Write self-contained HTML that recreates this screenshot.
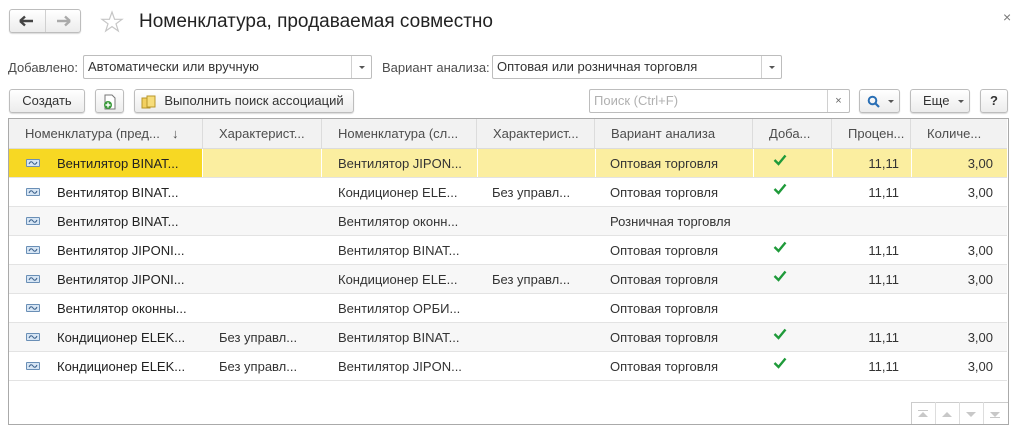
<!DOCTYPE html>
<html><head><meta charset="utf-8"><style>
*{box-sizing:border-box;margin:0;padding:0}
body{width:1020px;height:430px;background:#fff;font-family:"Liberation Sans",Arial,sans-serif;font-size:13px;color:#333;position:relative;overflow:hidden}
.a{position:absolute}
.btn{position:absolute;border:1px solid #bdbdbd;border-radius:3px;background:linear-gradient(#fff,#ececec);box-shadow:0 1px 1px rgba(0,0,0,.15);height:24px;line-height:22px;text-align:center;color:#333}
.inp{position:absolute;border:1px solid #bdbdbd;border-radius:2px;background:#fff;height:24px;line-height:22px;padding-left:4px;color:#333}
.dd{position:absolute;right:0;top:0;width:20px;height:22px;border-left:1px solid #d0d0d0}
.dd:after{content:"";position:absolute;left:7px;top:10px;border:3px solid transparent;border-top:3px solid #555;border-bottom:0}
.hdr{position:absolute;top:119px;height:30px;background:#f2f2f2;border-right:1px solid #dcdcdc;border-bottom:1px solid #dcdcdc;line-height:29px;padding-left:16px;color:#4d4d4d;white-space:nowrap}
.row{position:absolute;left:9px;width:998px;height:29px;border-bottom:1px solid #e3e3e3}
.c{position:absolute;top:0;height:28px;line-height:29px;white-space:nowrap;color:#333}
.r{text-align:right}
.ic{position:absolute;left:17px;top:10px;width:14px;height:8px;border:1px solid #6a8fb6;background:#d6e5f4;border-radius:1px}
</style></head><body>
<div class="btn" style="left:9px;top:9px;width:72px;height:24px"></div>
<div class="a" style="left:45px;top:10px;width:1px;height:22px;background:#d0d0d0"></div>
<svg class="a" style="left:19px;top:15px" width="16" height="12"><path d="M1 6H14M1 6L6 1.5M1 6L6 10.5" stroke="#444" stroke-width="2.4" fill="none"/></svg>
<svg class="a" style="left:55px;top:15px" width="16" height="12"><path d="M15 6H2M15 6L10 1.5M15 6L10 10.5" stroke="#aaa" stroke-width="2.4" fill="none"/></svg>
<svg class="a" style="left:100px;top:10px" width="24" height="24"><path d="M12 2L14.6 9.3L22 9.3L16 13.8L18.3 21L12 16.6L5.7 21L8 13.8L2 9.3L9.4 9.3Z" fill="none" stroke="#c6c6c6" stroke-width="1.2"/></svg>
<div class="a" style="left:139px;top:11px;font-size:19px;color:#222">Номенклатура, продаваемая совместно</div>
<div class="a" style="left:1003px;top:9px;font-size:14px;color:#777">×</div>

<div class="a" style="left:8px;top:60px;color:#4d4d4d">Добавлено:</div>
<div class="inp" style="left:83px;top:55px;width:289px">Автоматически или вручную<div class="dd"></div></div>
<div class="a" style="left:382px;top:60px;color:#4d4d4d">Вариант анализа:</div>
<div class="inp" style="left:492px;top:55px;width:290px">Оптовая или розничная торговля<div class="dd"></div></div>

<div class="btn" style="left:9px;top:89px;width:76px">Создать</div>
<div class="btn" style="left:95px;top:89px;width:29px"><svg style="margin-top:4px" width="14" height="16"><path d="M2 1H9L12 4V15H2Z" fill="#fff" stroke="#777"/><circle cx="5" cy="11" r="4" fill="#3a9a3a"/><path d="M5 8.5V13.5M2.5 11H7.5" stroke="#fff" stroke-width="1.4"/></svg></div>
<div class="btn" style="left:134px;top:89px;width:220px;padding-left:20px">Выполнить поиск ассоциаций</div>
<svg class="a" style="left:141px;top:93px" width="16" height="16"><rect x="1" y="5" width="8" height="10" fill="#f2d060" stroke="#b8962a"/><rect x="6" y="3" width="8" height="11" fill="#f7dd7a" stroke="#b8962a"/></svg>
<div class="inp" style="left:589px;top:89px;width:261px;color:#b0b0b0">Поиск (Ctrl+F)<div class="a" style="right:0;top:0;width:22px;height:22px;border-left:1px solid #d0d0d0;text-align:center;color:#666;font-size:11px">×</div></div>
<div class="btn" style="left:859px;top:89px;width:41px"><svg style="position:absolute;left:7px;top:5px" width="14" height="13"><circle cx="5.5" cy="5.5" r="3.8" fill="none" stroke="#2a6fb5" stroke-width="2"/><path d="M8.5 8.5L12 12" stroke="#2a6fb5" stroke-width="2.2"/></svg><div class="a" style="left:28px;top:10px;border:3px solid transparent;border-top:3px solid #555;border-bottom:0"></div></div>
<div class="btn" style="left:910px;top:89px;width:60px;text-align:left;padding-left:12px">Еще<div class="a" style="left:47px;top:10px;border:3px solid transparent;border-top:3px solid #555;border-bottom:0"></div></div>
<div class="btn" style="left:980px;top:89px;width:28px;font-weight:bold">?</div>

<div class="a" style="left:8px;top:118px;width:1001px;height:307px;border:1px solid #aaa"></div>
<div class="hdr" style="left:9px;width:194px">Номенклатура (пред...<span style="position:absolute;left:163px">↓</span></div>
<div class="hdr" style="left:203px;width:119px">Характерист...</div>
<div class="hdr" style="left:322px;width:155px">Номенклатура (сл...</div>
<div class="hdr" style="left:477px;width:118px">Характерист...</div>
<div class="hdr" style="left:595px;width:158px">Вариант анализа</div>
<div class="hdr" style="left:753px;width:79px">Доба...</div>
<div class="hdr" style="left:832px;width:79px">Процен...</div>
<div class="hdr" style="left:911px;width:96px;border-right:0">Количе...</div>

<div id="rows"></div>
<script>
var d=[["Вентилятор BINAT...","","Вентилятор JIPON...","","Оптовая торговля",1,"11,11","3,00"],
["Вентилятор BINAT...","","Кондиционер ELE...","Без управл...","Оптовая торговля",1,"11,11","3,00"],
["Вентилятор BINAT...","","Вентилятор оконн...","","Розничная торговля",0,"",""],
["Вентилятор JIPONI...","","Вентилятор BINAT...","","Оптовая торговля",1,"11,11","3,00"],
["Вентилятор JIPONI...","","Кондиционер ELE...","Без управл...","Оптовая торговля",1,"11,11","3,00"],
["Вентилятор оконны...","","Вентилятор ОРБИ...","","Оптовая торговля",0,"",""],
["Кондиционер ELEK...","Без управл...","Вентилятор BINAT...","","Оптовая торговля",1,"11,11","3,00"],
["Кондиционер ELEK...","Без управл...","Вентилятор JIPON...","","Оптовая торговля",1,"11,11","3,00"]];
var h="";
d.forEach(function(r,i){var top=149+i*29;var bg=i==0?"#fbeea0":(i%2==0?"#f7f7f7":"#fff");
h+='<div class="row" style="top:'+top+'px;background:'+bg+'">';
if(i==0){h+='<div class="a" style="left:0;top:0;width:193px;height:28px;background:#f7d823"></div>';
[193,312,468,586,744,823,902].forEach(function(x){h+='<div class="a" style="left:'+x+'px;top:0;width:1px;height:28px;background:#fff"></div>'});}
h+='<div class="ic"><svg style="position:absolute;left:1px;top:0" width="10" height="6"><path d="M1 4Q3 0 5 3T9 2" stroke="#3a5f8a" fill="none" stroke-width="1"/></svg></div><div class="c" style="left:48px;color:#222">'+r[0]+'</div>';
h+='<div class="c" style="left:210px">'+r[1]+'</div><div class="c" style="left:329px">'+r[2]+'</div><div class="c" style="left:483px">'+r[3]+'</div><div class="c" style="left:601px">'+r[4]+'</div>';
if(r[5])h+='<svg class="a" style="left:764px;top:5px" width="14" height="12"><path d="M1.5 6L5.5 10L12.5 1.5" stroke="#1f9a3a" stroke-width="2.4" fill="none"/></svg>';
h+='<div class="c r" style="left:823px;width:67px">'+r[6]+'</div><div class="c r" style="left:902px;width:82px">'+r[7]+'</div></div>';});
document.getElementById("rows").innerHTML=h;
</script>
<div class="a" style="left:911px;top:402px;width:97px;height:22px;border-top:1px solid #ccc;border-left:1px solid #ccc;background:#fff"></div>
<div class="a" style="left:935px;top:402px;width:1px;height:22px;background:#ddd"></div>
<div class="a" style="left:959px;top:402px;width:1px;height:22px;background:#ddd"></div>
<div class="a" style="left:983px;top:402px;width:1px;height:22px;background:#ddd"></div>
<svg class="a" style="left:911px;top:403px" width="97" height="21"><g fill="#c8c8c8"><rect x="7" y="7" width="10" height="1"/><path d="M7 14L12 9L17 14Z"/><path d="M31 14L36 9L41 14Z"/><path d="M55 9L60 14L65 9Z"/><path d="M79 9L84 14L89 9Z"/><rect x="79" y="14" width="10" height="1"/></g></svg>
</body></html>
